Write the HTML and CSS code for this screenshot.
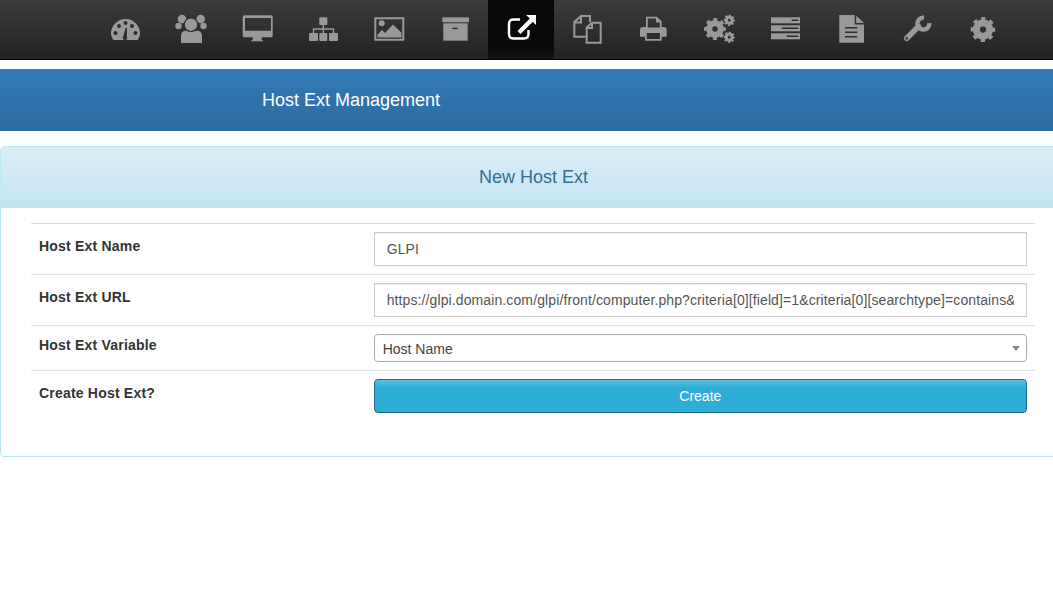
FILE: index.html
```html
<!DOCTYPE html>
<html lang="en">
<head>
  <meta charset="UTF-8" />
  <meta name="viewport" content="width=device-width, initial-scale=1" />
  <title>Host Ext Management</title>
  <link rel="stylesheet" href="styles.css">
</head>
<body>
  <svg class="icon-defs">
    <symbol id="gear" viewBox="0 0 32 32">
      <circle cx="16" cy="16" r="8.5" fill="none" stroke="currentColor" stroke-width="9" />
      <circle cx="16" cy="16" r="13.5" fill="none" stroke="currentColor" stroke-width="5" stroke-dasharray="5.3 5.3" stroke-dashoffset="2.65" />
    </symbol>
  </svg>

  <nav class="menu">
    <a class="menu-item" href="#"><svg class="icon" viewBox="0 0 32 32">
      <path fill-rule="evenodd" d="M4.500 27C3 24.800 2 22.800 2 20.500A14.500 14.500 0 0 1 31 20.500C31 22.800 30 24.800 28.500 27ZM6.500 18a2 2 0 1 0 .01 0ZM10 11a2 2 0 1 0 .01 0ZM16.500 8a2 2 0 1 0 .01 0ZM23 11a2 2 0 1 0 .01 0ZM26.500 18a2 2 0 1 0 .01 0Z" />
      <path class="cut" d="M14.200 23.500L16.600 15H18L17.800 23.500A2.300 2.300 0 1 1 14.200 23.500Z" />
    </svg></a>
    <a class="menu-item" href="#"><svg class="icon" viewBox="0 0 32 32">
      <circle cx="7" cy="6" r="4.300" /><circle cx="25.700" cy="6" r="4.300" />
      <circle cx="3.500" cy="13" r="3.200" /><circle cx="28.500" cy="13" r="3.200" />
      <path d="M6 30V23Q6 17.700 11 17.700H22Q27 17.700 27 23V30Z" />
      <circle class="ring" cx="16" cy="11.700" r="6.800" />
    </svg></a>
    <a class="menu-item" href="#"><svg class="icon" viewBox="0 0 32 32">
      <path fill-rule="evenodd" d="M3.200 2.300H30.200Q31.700 2.300 31.700 3.800V22.800Q31.700 24.300 30.200 24.300H20.700V27.300H22V28.300H10V27.300H11.700V24.300H3.200Q1.700 24.300 1.700 22.800V3.800Q1.700 2.300 3.200 2.300ZM4 5V17.700H30V5Z" />
    </svg></a>
    <a class="menu-item" href="#"><svg class="icon" viewBox="0 0 32 32">
      <rect x="12.300" y="4.300" width="8" height="7.700" rx="1" />
      <rect x="2" y="20" width="9" height="8" rx="1" /><rect x="12.300" y="20" width="8" height="8" rx="1" /><rect x="22" y="20" width="9" height="8" rx="1" />
      <path class="line" d="M16.300 12V20M6.500 20V16H26.500V20" />
    </svg></a>
    <a class="menu-item" href="#"><svg class="icon" viewBox="0 0 32 32">
      <path fill-rule="evenodd" d="M1.300 4.300H31.300V27.700H1.300ZM3.300 6.300V25.700H29.300V6.300Z" />
      <circle cx="8.700" cy="10.300" r="3" />
      <path d="M4.500 24.500V21.500L9 17L12 20L20 11.500L28.500 19.800V24.500Z" />
    </svg></a>
    <a class="menu-item" href="#"><svg class="icon" viewBox="0 0 32 32">
      <rect x="3.300" y="4.300" width="26.700" height="5" />
      <rect x="4.300" y="10.300" width="24.400" height="17.400" />
      <rect class="cut" x="13.300" y="14.700" width="5.400" height="1.400" />
    </svg></a>
    <a class="menu-item active" href="#"><svg class="icon" viewBox="0 0 32 32">
      <path class="outline" d="M15 6.500H8.500Q4 6.500 4 11V21Q4 25.500 8.500 25.500H19Q23.500 25.500 23.500 21V17" />
      <path d="M21 2H31V12L27.800 8.800L15.500 21L12.500 18L24.800 5.500Z" />
    </svg></a>
    <a class="menu-item" href="#"><svg class="icon" viewBox="0 0 32 32">
      <path class="outline" d="M14.700 23.700H3.300V9L10 3H19V9M10 3V9.500H3.300" />
      <path class="outline" d="M15.700 29.700V14.500L21 9.700H29.700V29.700ZM21 9.700V15H15.700" />
    </svg></a>
    <a class="menu-item" href="#"><svg class="icon" viewBox="0 0 32 32">
      <path fill-rule="evenodd" d="M9 3.700H20L24.700 8.500V14H26.700Q29.700 14 29.700 17V23.700H24.700V27.700H8V23.700H3V17Q3 14 6 14H9ZM10.800 5.500V14.500H22.800V9.500H19V5.500ZM9.800 20V25.900H22.900V20Z" />
    </svg></a>
    <a class="menu-item" href="#"><svg class="icon" viewBox="0 0 32 32">
      <use href="#gear" x="1" y="5" width="22" height="22" />
      <use href="#gear" x="20.500" y="1.500" width="11.500" height="11.500" />
      <use href="#gear" x="20.500" y="18.500" width="11.500" height="11.500" />
    </svg></a>
    <a class="menu-item" href="#"><svg class="icon" viewBox="0 0 32 32">
      <rect x="2" y="4.300" width="29" height="6" /><rect x="2" y="12.300" width="29" height="6" /><rect x="2" y="20.300" width="29" height="6" />
      <rect class="cut" x="22.700" y="6.500" width="6.600" height="1.500" />
      <rect class="cut" x="12.700" y="14.500" width="16.600" height="1.500" />
      <rect class="cut" x="17.700" y="22.500" width="11.600" height="1.500" />
    </svg></a>
    <a class="menu-item" href="#"><svg class="icon" viewBox="0 0 32 32">
      <path d="M4.300 2H19.700V11.500H29V29.700H4.300Z" /><path d="M21.200 2.500L29 10H21.200Z" />
      <path class="line-dark" d="M10 14.700H22.300M10 19.300H22.300M10 23.700H22.300" />
    </svg></a>
    <a class="menu-item" href="#"><svg class="icon" viewBox="0 0 32 32">
      <path class="line-thick" d="M5.800 25.200L17.500 13.500" />
      <path class="wrench" d="M23 4.700A6 6 0 1 0 28.300 10.200" />
      <circle class="cut" cx="5.700" cy="25.300" r="1.200" />
    </svg></a>
    <a class="menu-item" href="#"><svg class="icon" viewBox="0 0 32 32">
      <use href="#gear" x="3.500" y="4" width="25" height="25" />
    </svg></a>
  </nav>

  <div class="title-band">
    <h2 class="title">Host Ext Management</h2>
  </div>

  <section class="panel">
    <h3 class="panel-heading">New Host Ext</h3>
    <div class="panel-body">
      <form class="form-table">
        <div class="form-row">
          <label class="form-label">Host Ext Name</label>
          <div class="form-field"><input class="text-input" type="text" value="GLPI"></div>
        </div>
        <div class="form-row">
          <label class="form-label">Host Ext URL</label>
          <div class="form-field"><input class="text-input" type="text" value="https://glpi.domain.com/glpi/front/computer.php?criteria[0][field]=1&amp;criteria[0][searchtype]=contains&amp;criteria[0][value]=${host_name}"></div>
        </div>
        <div class="form-row">
          <label class="form-label form-label-short">Host Ext Variable</label>
          <div class="form-field">
            <div class="select-box">Host Name<span class="select-arrow"></span></div>
          </div>
        </div>
        <div class="form-row">
          <label class="form-label">Create Host Ext?</label>
          <div class="form-field"><button class="btn-create" type="button">Create</button></div>
        </div>
      </form>
    </div>
  </section>
</body>
</html>
```

FILE: styles.css
```css
html, body {
  overflow-x: hidden;
}
body {
  margin: 0;
  width: 1067px;
  font-family: 'Liberation Sans', Arial, sans-serif;
  font-size: 14px;
  color: #333;
  background: #fff;
}
.icon-defs {
  display: none;
}
.menu {
  display: flex;
  height: 59px;
  padding-left: 92px;
  background: linear-gradient(to bottom, #3c3c3c, #222);
  border-bottom: 1px solid #000;
}
.menu-item {
  display: flex;
  align-items: center;
  justify-content: center;
  width: 66px;
  color: #999;
}
.menu-item.active {
  background: linear-gradient(to bottom, #080808 76%, #141414);
  color: #fff;
}
.icon {
  width: 32px;
  height: 32px;
  margin-top: -1px;
  fill: currentColor;
}
.icon .cut {
  fill: #2d2d2d;
}
.icon .ring {
  stroke: #2f2f2f;
  stroke-width: 1.2;
}
.icon .line {
  fill: none;
  stroke: currentColor;
  stroke-width: 1.4;
}
.icon .line-dark {
  fill: none;
  stroke: #2d2d2d;
  stroke-width: 1.5;
}
.icon .line-thick {
  fill: none;
  stroke: currentColor;
  stroke-width: 5.6;
  stroke-linecap: round;
}
.icon .wrench {
  fill: none;
  stroke: currentColor;
  stroke-width: 4.4;
}
.icon .outline {
  fill: none;
  stroke: currentColor;
  stroke-width: 2;
}
.active .icon .outline {
  stroke-width: 2.4;
}
.title-band {
  margin-top: 9px;
  height: 62px;
  padding-left: 262px;
  display: flex;
  align-items: center;
  background: linear-gradient(to bottom, #337ab7, #2d6ca2);
}
.title {
  margin: 0;
  font-size: 18px;
  font-weight: normal;
  color: #fff;
}
.panel {
  margin-top: 15px;
  border: 1px solid #bce8f1;
  border-radius: 4px;
}
.panel-heading {
  margin: 0;
  height: 61px;
  line-height: 60px;
  text-align: center;
  font-size: 18px;
  font-weight: normal;
  color: #31708f;
  background: linear-gradient(to bottom, #d9edf7, #c4e3f3);
}
.panel-body {
  padding: 15px 31px 15px 30px;
}
.form-table {
  display: block;
  margin-bottom: 20px;
}
.form-row {
  display: grid;
  grid-template-columns: 1fr 2fr;
  border-top: 1px solid #ddd;
}
.form-label {
  padding: 12px 8px 0;
  font-weight: bold;
  line-height: 20px;
  letter-spacing: .2px;
}
.form-label-short {
  padding-top: 9px;
}
.form-field {
  padding: 8px;
}
.text-input {
  display: block;
  box-sizing: border-box;
  width: 100%;
  height: 34px;
  padding: 6px 12px;
  border: 1px solid #ccc;
  font: 14px 'Liberation Sans', Arial, sans-serif;
  letter-spacing: .11px;
  color: #555;
  background: #fff;
  box-shadow: inset 0 1px 1px rgba(0, 0, 0, .075);
}
.select-box {
  position: relative;
  box-sizing: border-box;
  height: 28px;
  padding-left: 8px;
  line-height: 28px;
  color: #444;
  border: 1px solid #aaa;
  border-radius: 4px;
  background: #fff;
}
.select-arrow {
  position: absolute;
  right: 6px;
  top: 11px;
  border-style: solid;
  border-width: 5px 4px 0;
  border-color: #888 transparent transparent;
}
.btn-create {
  display: block;
  width: 100%;
  height: 34px;
  border: 1px solid #1b6d85;
  border-radius: 4px;
  font: 14px 'Liberation Sans', Arial, sans-serif;
  color: #fff;
  background: linear-gradient(to bottom, #5bc0de, #2eaed6 8px);
}
```
